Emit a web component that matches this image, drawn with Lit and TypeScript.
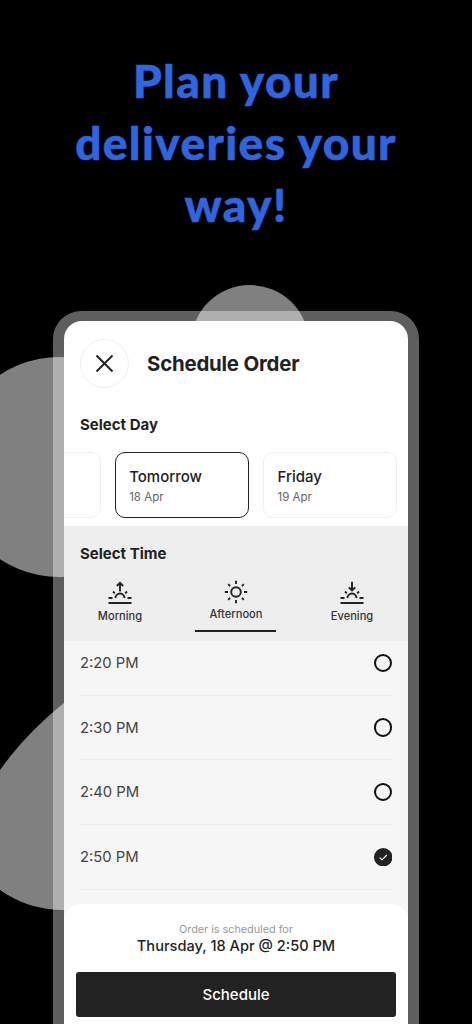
import { LitElement, html, css, svg } from "lit";
import { customElement } from "lit/decorators.js";

const sunrise = (dir: "up" | "down") => html`<svg class="ic" viewBox="0 0 26 26" fill="none" stroke="#222" stroke-width="1.900">
  ${dir === "up"
    ? svg`<path d="M13 11.500V2.800M9.800 6 13 2.800 16.200 6"/>`
    : svg`<path d="M13 1.800V10.500M9.800 7.300 13 10.500 16.200 7.300"/>`}
  <path d="M8.500 18a4.500 4.500 0 0 1 9 0M1.500 18h4M20.500 18h4M6 11.500l1.800 1.800M20 11.500l-1.800 1.800M1.500 23h23"/>
</svg>`;

const sun = html`<svg class="ic" viewBox="0 0 26 26" fill="none" stroke="#222" stroke-width="1.900">
  <circle cx="13" cy="13" r="4.800"/>
  <path d="M13 1.800v3.200M13 21v3.200M1.800 13h3.200M21 13h3.200M5.200 5.200l1.900 1.900M18.900 18.900l1.900 1.900M20.800 5.200l-1.900 1.900M7.100 18.900l-1.900 1.900"/>
</svg>`;

@customElement("app-root")
export class AppRoot extends LitElement {
  static styles = css`
    :host { display: block; width: 472px; height: 1024px; background: #000; overflow: hidden; position: relative; font-family: Inter, "Liberation Sans", sans-serif; color: #222; }
    .blob { position: absolute; background: #808080; border-radius: 50%; }
    .b1 { left: 190.500px; top: 285px; width: 118px; height: 118px; }
    .b2 { left: -50px; top: 357px; width: 220px; height: 220px; }
    .b3 { position: absolute; left: 0; top: 690px; width: 110px; height: 230px; fill: #808080; }
    h1 { position: relative; margin: 0; padding-top: 50px; height: 260px; box-sizing: border-box; text-align: center; color: #2f66e0; font: 900 46px/62px "Lato", sans-serif; letter-spacing: 1.400px; -webkit-text-stroke: .5px #2f66e0; }
    .frame { position: relative; margin: 51px 0 0 53px; width: 366px; height: 760px; box-sizing: border-box; padding: 10px 11px 0; border-radius: 28px; background: rgba(255,255,255,.37); }
    .screen { position: relative; height: 750px; background: #fff; border-radius: 18px 18px 0 0; overflow: hidden; }
    .head { display: flex; align-items: center; gap: 18px; padding: 18px 16px 0; }
    .close { width: 49px; height: 49px; box-sizing: border-box; border: 1px solid #efefef; border-radius: 50%; display: flex; align-items: center; justify-content: center; }
    .close svg { width: 19px; height: 19px; }
    .title { font-size: 20.400px; font-weight: 700; letter-spacing: -.2px; }
    .label { font-size: 15px; font-weight: 700; line-height: 20px; }
    .day-label { padding: 27px 16px 0; }
    .days { display: flex; gap: 14px; margin: 17px 0 0 -97px; }
    .day { flex: none; width: 134px; height: 66px; box-sizing: border-box; border: 1.500px solid #f0f0f0; border-radius: 10px; padding: 14px 13.500px; }
    .day.on { border: 1.800px solid #222; padding: 13.700px 13.200px; }
    .day b { display: block; font-size: 15px; font-weight: 500; line-height: 20px; }
    .day span { display: block; font-size: 11.500px; color: #666; line-height: 16px; margin-top: 2px; }
    .time { margin-top: 8px; background: #eee; padding: 18px 0 0; height: 115px; box-sizing: border-box; }
    .time .label { padding-left: 16px; }
    .tabs { display: grid; grid-template-columns: repeat(3, 116px); justify-content: center; margin-top: 16px; }
    .tab { display: flex; flex-direction: column; align-items: center; }
    .ic { width: 26px; height: 26px; }
    .tab span { font-size: 11.100px; font-weight: 500; color: #333; line-height: 15px; margin-top: 2.500px; }
    .tab.on .ic { margin-top: -1.300px; }
    .tab.on span { position: relative; padding-bottom: 10.500px; margin-top: 2px; }
    .tab.on span::after { content: ""; position: absolute; left: 50%; bottom: 0; width: 81px; margin-left: -40.500px; height: 2px; background: #222; }
    .list { background: #f6f6f6; padding: 0 16px; height: 400px; overflow: hidden; }
    .rows { margin-top: -10px; }
    .row { display: flex; align-items: center; justify-content: space-between; height: 64.700px; border-bottom: 1px solid #ececec; box-sizing: border-box; font-size: 14.800px; font-weight: 400; color: #444; }
    .row i { width: 18.500px; height: 18.500px; box-sizing: border-box; border: 2.400px solid #111; border-radius: 50%; }
    .row svg { width: 18.500px; height: 18.500px; }
    .foot { position: absolute; left: 0; right: 0; top: 583px; height: 167px; background: #fff; border-radius: 16px 16px 0 0; padding: 19px 12px 0; box-sizing: border-box; text-align: center; }
    .foot small { display: block; font-size: 10.800px; color: #999; line-height: 14px; }
    .foot strong { display: block; font-size: 14.600px; font-weight: 500; line-height: 18px; }
    .btn { margin-top: 17px; height: 45px; background: #222; color: #fff; border-radius: 3px; display: flex; align-items: center; justify-content: center; font-size: 15px; font-weight: 500; }
  `;

  render() {
    return html`
      <div class="blob b1"></div><div class="blob b2"></div>
      <svg class="b3" viewBox="0 0 110 230"><path d="M0 80C18 55 40 32 64 13H110V220H64C40 220 18 213 0 200Z"/></svg>
      <h1>Plan your<br />deliveries your<br />way!</h1>
      <div class="frame"><div class="screen">
        <div class="head">
          <div class="close"><svg viewBox="0 0 19 19" fill="none" stroke="#222" stroke-width="1.900"><path d="M1.500 1.500l16 16M17.500 1.500l-16 16"/></svg></div>
          <div class="title">Schedule Order</div>
        </div>
        <div class="label day-label">Select Day</div>
        <div class="days">
          <div class="day"></div>
          <div class="day on"><b>Tomorrow</b><span>18 Apr</span></div>
          <div class="day"><b>Friday</b><span>19 Apr</span></div>
        </div>
        <div class="time">
          <div class="label">Select Time</div>
          <div class="tabs">
            <div class="tab">${sunrise("up")}<span>Morning</span></div>
            <div class="tab on">${sun}<span>Afternoon</span></div>
            <div class="tab">${sunrise("down")}<span>Evening</span></div>
          </div>
        </div>
        <div class="list"><div class="rows">
          <div class="row">2:20 PM<i></i></div>
          <div class="row">2:30 PM<i></i></div>
          <div class="row">2:40 PM<i></i></div>
          <div class="row">2:50 PM<svg viewBox="0 0 18 18"><circle cx="9" cy="9" r="9" fill="#222"/><path d="M5.500 9.300l2.300 2.200 4.700-4.700" fill="none" stroke="#fff" stroke-width="1.100"/></svg></div>
        </div></div>
        <div class="foot">
          <small>Order is scheduled for</small>
          <strong>Thursday, 18 Apr @ 2:50 PM</strong>
          <div class="btn">Schedule</div>
        </div>
      </div></div>
    `;
  }
}
